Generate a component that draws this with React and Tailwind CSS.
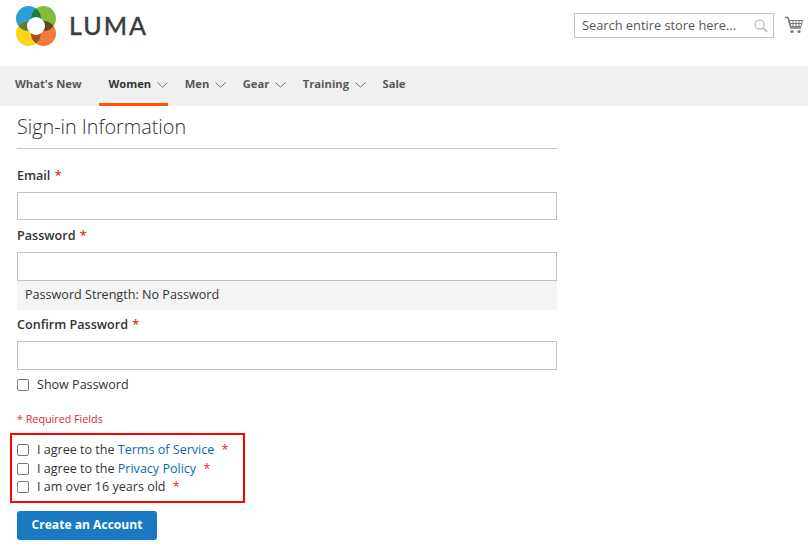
function Logo() {
  return (
    <svg width="40" height="40" viewBox="0 0 40 40" className="shrink-0">
      <circle cx="12.5" cy="12.5" r="12.5" fill="#2a9fd8" />
      <circle cx="27.5" cy="12.5" r="12.5" fill="#84bd3a" />
      <circle cx="12.5" cy="27.5" r="12.5" fill="#fbd416" />
      <circle cx="27.5" cy="27.5" r="12.5" fill="#f47a38" />
      <path d="M20 2.5 A12.5 12.5 0 0 1 20 22.5 A12.5 12.5 0 0 1 20 2.5 Z" fill="#1a7d3f" />
      <path d="M2.5 20 A12.5 12.5 0 0 1 22.5 20 A12.5 12.5 0 0 1 2.5 20 Z" fill="#5f7f35" />
      <path d="M17.5 20 A12.5 12.5 0 0 1 37.5 20 A12.5 12.5 0 0 1 17.5 20 Z" fill="#5c4a1e" />
      <path d="M20 17.5 A12.5 12.5 0 0 1 20 37.5 A12.5 12.5 0 0 1 20 17.5 Z" fill="#a5511f" />
      <circle cx="20" cy="20" r="9" fill="#ffffff" />
    </svg>
  );
}

function CartIcon() {
  return (
    <svg width="18" height="18" viewBox="0 0 18 18" fill="none" stroke="#7a7a7a">
      <path d="M0 1.5 H3 L6 12 H16" strokeWidth="1.5" />
      <path d="M3.5 4.5 H17.5 L16 10.5 H5.5 Z" strokeWidth="1" />
      <path d="M3.8 7.5 H17 M8 4.5 V10.5 M11 4.5 V10.5 M14 4.5 V10.5" strokeWidth="1" />
      <circle cx="7" cy="15.5" r="1.6" fill="#7a7a7a" stroke="none" />
      <circle cx="14" cy="15.5" r="1.6" fill="#7a7a7a" stroke="none" />
    </svg>
  );
}

function SearchIcon() {
  return (
    <svg width="14" height="14" viewBox="0 0 14 14" fill="none" stroke="#c2c2c2" strokeWidth="1.4">
      <circle cx="5.5" cy="5.5" r="4.5" />
      <path d="M9 9 L13 13" strokeWidth="2" />
    </svg>
  );
}

function Chevron() {
  return (
    <svg width="11" height="6" viewBox="0 0 11 6" fill="none" stroke="#707070" strokeWidth="1" className="ml-[6px] mt-[1px]">
      <path d="M0.5 0.5 L5.5 5.2 L10.5 0.5" />
    </svg>
  );
}

function NavItem({ label, active, chevron }) {
  return (
    <a
      className={
        "flex items-center h-10 ml-[16.5px] first:ml-0 text-[11.2px] font-bold border-b-[3px] " +
        (active ? "border-[#ff5501] text-[#333] -mr-[10px] -translate-x-[10px] pl-[10px]" : "border-transparent text-[#575757]")
      }
    >
      {label}
      {chevron && <Chevron />}
    </a>
  );
}

function Field({ label, inputClass, className }) {
  return (
    <div className={className}>
      <label className="block pt-px text-[12.6px] font-semibold leading-[20px] text-[#333]">
        {label} <span className="text-[#e02b27] ml-px">*</span>
      </label>
      <input className={"block mt-[6px] w-full border border-[#c2c2c2] bg-white " + inputClass} />
    </div>
  );
}

function Check({ children }) {
  return (
    <label className="flex items-center gap-[8px] h-[18.5px] text-[12.55px] text-[#333] whitespace-nowrap">
      <input type="checkbox" className="appearance-none shrink-0 w-3 h-3 -mt-px rounded-[2px] border border-[#767676] bg-white" />
      <span>{children}</span>
    </label>
  );
}

function Star() {
  return <span className="text-[#e02b27] ml-1">*</span>;
}

export default function App() {
  return (
    <div className="w-[808px] h-[558px] overflow-hidden bg-white font-['Open_Sans',sans-serif] text-[#333]">
      <header className="h-[66px] flex justify-between pl-4 pr-[5px]">
        <div className="flex items-start pt-[6px] gap-[13px]">
          <Logo />
          <span className="mt-[3px] text-[25px] leading-[32px] font-medium tracking-[2px] text-[#3d3d3d] font-['Lato',sans-serif] [-webkit-text-stroke:0.3px_#3d3d3d]">
            LUMA
          </span>
        </div>
        <div className="flex items-start pt-[13px] gap-[11px]">
          <div className="w-[200px] h-[25px] border border-[#c2c2c2] flex items-center justify-between pl-[7px] pr-[5px]">
            <span className="text-[12.8px] text-[#575757]">Search entire store here...</span>
            <SearchIcon />
          </div>
          <div className="pt-[3px]">
            <CartIcon />
          </div>
        </div>
      </header>

      <nav className="h-10 bg-[#f0f0f0] flex items-center pl-[15px]">
        <NavItem label="What's New" />
        <div className="ml-[27px] flex">
          <NavItem label="Women" active chevron />
        </div>
        <NavItem label="Men" chevron />
        <NavItem label="Gear" chevron />
        <NavItem label="Training" chevron />
        <NavItem label="Sale" />
      </nav>

      <main className="w-[540px] ml-[17px]">
        <h2 className="mt-[6px] pb-[6px] text-[19.8px] leading-[30px] font-light text-[#333] border-b border-[#c6c6c6]">
          Sign-in Information
        </h2>

        <Field label="Email" inputClass="h-[28px]" className="mt-[16px]" />
        <Field label="Password" inputClass="h-[29px]" className="mt-[5px]" />
        <div className="h-[29px] bg-[#f4f4f4] flex items-center pl-2 text-[12.6px] text-[#333]">
          Password Strength: No Password
        </div>
        <Field label="Confirm Password" inputClass="h-[29px]" className="mt-[4px]" />

        <div className="mt-[6px]">
          <Check>Show Password</Check>
        </div>

        <p className="mt-[16px] text-[10.75px] leading-[16px] text-[#e02b27]">* Required Fields</p>

        <div className="-ml-[7px] mt-[6px] w-[235px] h-[70px] border-2 border-[#ff0000] pl-[5px] pt-[7px]">
          <Check>
            I agree to the <a className="text-[#006bb4]">Terms of Service</a> <Star />
          </Check>
          <Check>
            I agree to the <a className="text-[#006bb4]">Privacy Policy</a> <Star />
          </Check>
          <Check>
            I am over 16 years old <Star />
          </Check>
        </div>

        <button className="mt-2 w-[140px] h-[29px] pt-px rounded-[3px] bg-[#1979c3] text-white text-[12.1px] font-bold">
          Create an Account
        </button>
      </main>
    </div>
  );
}
